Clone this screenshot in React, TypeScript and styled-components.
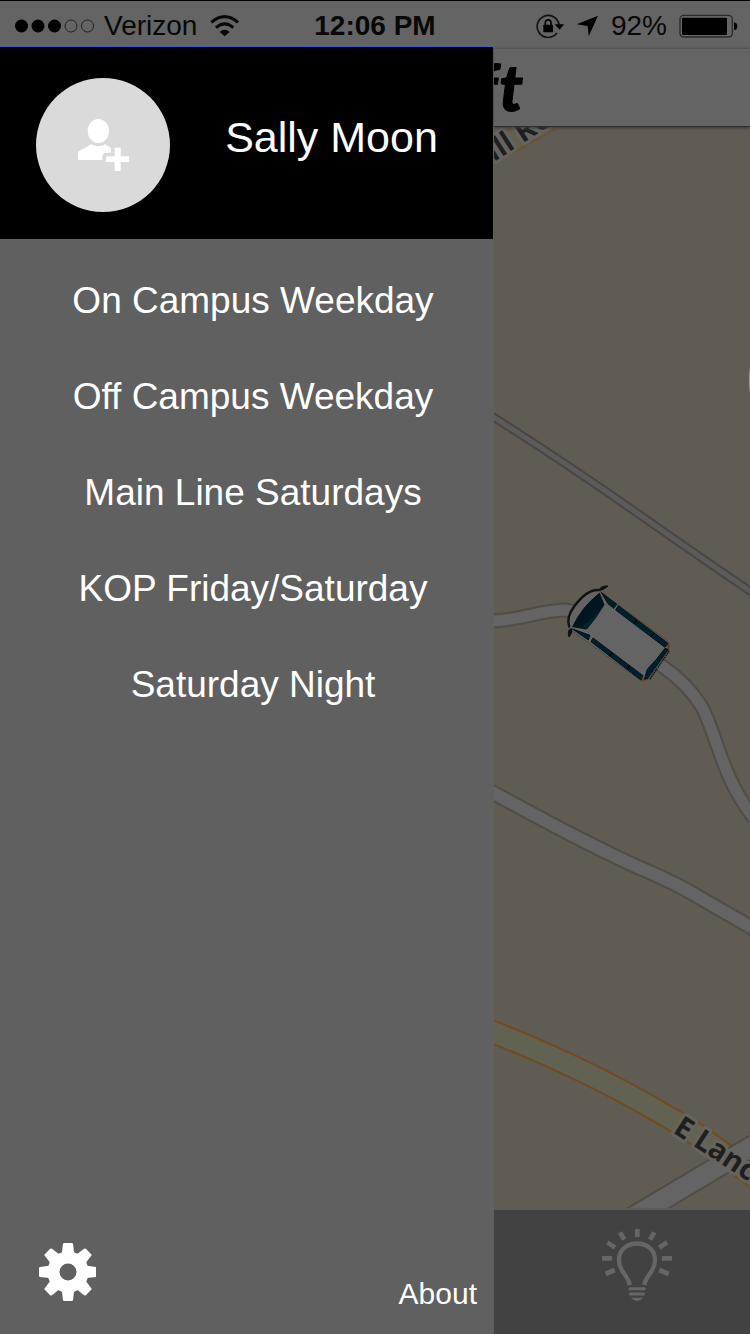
import React from "react";
import styled, { createGlobalStyle } from "styled-components";

const GlobalStyle = createGlobalStyle`
  *, *::before, *::after { box-sizing: border-box; }
  body { margin: 0; background: #606060; }
  button { border: 0; padding: 0; background: none; font: inherit; color: inherit; cursor: pointer; }
  a { color: inherit; text-decoration: none; }
  svg { display: block; flex: none; }
`;

const Page = styled.div`
  display: flex;
  flex-direction: column;
  min-height: 100vh;
  overflow: hidden;
  font-family: "Liberation Sans", Arial, Helvetica, sans-serif;
`;

const StatusBar = styled.header`
  display: grid;
  grid-template-columns: 1fr auto 1fr;
  align-items: center;
  height: 46px;
  padding: 4px 12px 0;
  border-top: 1px solid #000;
  background: #646464;
  color: #080808;
  font-size: 28px;
  line-height: 32px;
  white-space: nowrap;
`;

const StatusGroup = styled.div<{ $end?: boolean }>`
  display: flex;
  align-items: center;
  gap: ${(p) => (p.$end ? 12 : 10)}px;
  padding-left: 3px;
  justify-content: ${(p) => (p.$end ? "flex-end" : "flex-start")};
`;

const Clock = styled.time`
  font-weight: 700;
`;

const Body = styled.div`
  display: flex;
  flex: 1;
`;

const Drawer = styled.aside`
  display: flex;
  flex-direction: column;
  flex: none;
  width: min(494px, 66vw);
  border-right: 1px solid #606060;
  background: #606060;
  color: #fff;
`;

const Profile = styled.div`
  display: flex;
  align-items: flex-start;
  padding: 31px 0 27px 36px;
  border-top: 1px solid #4560c4;
  background: #000;
`;

const Avatar = styled.button`
  display: flex;
  align-items: center;
  justify-content: center;
  flex: none;
  width: 134px;
  height: 134px;
  border-radius: 50%;
  background: #dadada;
`;

const UserName = styled.h1`
  flex: 1;
  margin: 0;
  font-size: 43px;
  font-weight: 400;
  line-height: 118px;
  text-align: center;
  white-space: nowrap;
`;

const RouteList = styled.ul`
  flex: 1;
  margin: 0;
  padding: 14px 0 0 13px;
  list-style: none;
`;

const RouteLink = styled.a`
  display: block;
  font-size: 37px;
  line-height: 96px;
  text-align: center;
  white-space: nowrap;
`;

const DrawerFooter = styled.footer`
  display: flex;
  align-items: flex-end;
  justify-content: space-between;
  padding: 0 16px 22px 38px;
`;

const IconButton = styled.button`
  display: block;
  margin-bottom: 10px;
`;

const AboutLink = styled.a`
  font-size: 30px;
  line-height: 36px;
`;

const Screen = styled.main`
  display: flex;
  flex-direction: column;
  flex: 1;
  min-width: 0;
  background: #646464;
`;

const NavBar = styled.div`
  z-index: 1;
  display: flex;
  align-items: flex-start;
  height: 79px;
  margin-top: 2px;
  border-top: 1px solid #555;
  border-bottom: 1px solid #2c2c2c;
  box-shadow: 0 1px 3px #3a3835;
`;

const Logo = styled.div`
  display: flex;
  justify-content: flex-end;
  gap: 2px;
  width: 29px;
  overflow: hidden;
  color: #000;
  font-family: Lato, "Liberation Sans", sans-serif;
  font-size: 64px;
  font-style: italic;
  font-weight: 900;
  line-height: 76px;
  -webkit-text-stroke: 1px #000;
`;

const Map = styled.svg`
  flex: 1 1 0;
  width: 100%;
  min-height: 0;
  background: #605c54;
`;

const TabBar = styled.nav`
  display: flex;
  align-items: center;
  justify-content: center;
  height: 126px;
  padding: 0 0 16px 30px;
  border-top: 2px solid #5b5b5b;
  background: #424242;
`;

const StreetLabel = styled.text`
  fill: #1f1f1f;
  stroke: #66645f;
  stroke-width: 6px;
  stroke-linejoin: round;
  paint-order: stroke;
  font-family: "Open Sans", "Noto Sans", sans-serif;
  font-size: 29px;
  font-weight: 700;
`;

const routes = [
  "On Campus Weekday",
  "Off Campus Weekday",
  "Main Line Saturdays",
  "KOP Friday/Saturday",
  "Saturday Night",
];

const SignalDots = () => (
  <svg width="79" height="14" viewBox="0 0 79 14" aria-hidden="true">
    {[6.5, 23, 39.5].map((x) => (
      <circle key={x} cx={x} cy="7" r="6.5" fill="#000" />
    ))}
    {[56, 72.5].map((x) => (
      <circle key={x} cx={x} cy="7" r="6" fill="none" stroke="#222" strokeWidth="1" />
    ))}
  </svg>
);

const WifiIcon = () => (
  <svg width="38" height="22" viewBox="624 42 114 66" aria-hidden="true">
    <g fill="none" stroke="#080808" strokeWidth="9">
      <path d="M637,64 Q677,30 717,64" />
      <path d="M651,80 Q677,57 703,80" />
    </g>
    <path d="M662,93 Q677,80 692,93 L677,106 Z" fill="#080808" />
  </svg>
);

const RotationLockIcon = () => (
  <svg width="28" height="24" viewBox="480 38 84 72" aria-hidden="true">
    <path d="M549,70 A33,33 0 1 0 543,95" fill="none" stroke="#111" strokeWidth="5" />
    <path d="M536,69 H564 L551,85 Z" />
    <rect x="502" y="70" width="29" height="23" rx="2" />
    <path d="M508,72 V64 A8.500,8.500 0 0 1 525,64 V72" fill="none" stroke="#000" strokeWidth="5" />
  </svg>
);

const LocationIcon = () => (
  <svg width="23" height="22" viewBox="602 44 69 66" aria-hidden="true">
    <path d="M668,46 L640,108 L637,77 L604,72 Z" />
  </svg>
);

const BatteryIcon = () => (
  <svg width="59" height="24" viewBox="912 39 177 72" aria-hidden="true">
    <rect x="915" y="43" width="157" height="65" rx="11" fill="none" stroke="#2a2a2a" strokeWidth="4" />
    <rect x="921" y="50" width="135" height="52" rx="4" />
    <path d="M1077,64 Q1087,66 1087,76 Q1087,86 1077,88 Z" />
  </svg>
);

const AddPersonIcon = () => (
  <svg width="55" height="56" viewBox="168 171 165 168" fill="#fff" aria-hidden="true">
    <ellipse cx="235" cy="213" rx="32" ry="36" />
    <path d="M214,253 Q235,265 256,253 L273,264 V278 H258 Q247,279 247,290 V300 H178 Q174,300 174,296 V279 Q174,275 179,272 Z" />
    <rect x="284" y="263" width="18" height="70" />
    <rect x="258" y="289" width="69" height="17" />
  </svg>
);

const GearIcon = () => (
  <svg width="58" height="60" viewBox="-30 -30 58 60" aria-hidden="true">
    <circle r="14.500" fill="none" stroke="#fff" strokeWidth="12" />
    {[0, 45, 90, 135, 180, 225, 270, 315].map((a) => (
      <path
        key={a}
        transform={`rotate(${a})`}
        fill="#fff"
        d="M-7,-17 Q-5.600,-20 -5.300,-26 L-5,-28 Q-4.800,-29 -3.800,-29 H3.800 Q4.800,-29 5,-28 L5.300,-26 Q5.600,-20 7,-17 Z"
      />
    ))}
  </svg>
);

const BulbIcon = () => (
  <svg width="74" height="74" viewBox="60 81 222 222" fill="none" stroke="#666" aria-hidden="true">
    <path
      strokeWidth="13"
      d="M149,255 Q147,240 131,219 Q117,200 117,180 C117,114 225,114 225,180 Q225,200 211,219 Q195,240 193,255"
    />
    <path strokeWidth="9" strokeLinecap="round" d="M150,266 H193 M151,282 H191" />
    <path stroke="none" fill="#666" d="M152,293 H190 Q180,303 171,303 Q162,302 152,293 Z" />
    <path
      strokeWidth="14"
      d="M172,87 V111 M66,175 H96 M246,175 H276 M120,97 L133,119 M223,97 L210,119 M82,127 L105,143 M261,127 L238,143 M77,222 L104,210 M266,222 L238,210"
    />
  </svg>
);

const Van = () => (
  <g transform="translate(550 570) scale(0.33333)">
    <path
      d="M145,60 L355,215 Q362,228 352,245 L295,327 Q285,338 272,332 L66,182 Q40,160 70,118 Q105,60 145,60 Z"
      fill="#646464"
      stroke="#4b4943"
      strokeWidth="3"
    />
    <path d="M58,172 Q48,140 72,110 Q110,58 146,60" fill="none" stroke="#111" strokeWidth="7" />
    <g stroke="#001218" strokeWidth="3" strokeLinejoin="round">
      <path d="M148,70 L162,104 Q138,145 110,177 L68,170 Q95,112 148,70 Z" fill="#00171f" />
      <g fill="#00202b">
        <path d="M154,68 L200,103 L191,115 L174,101 Z" />
        <path d="M205,107 L354,220 L345,232 L197,120 Z" />
        <path d="M68,177 L120,196 L115,210 Z" />
        <path d="M129,204 L279,317 L273,330 L123,215 Z" />
        <path d="M345,235 L355,238 L292,326 L283,328 L292,298 Q320,270 345,235 Z" />
      </g>
    </g>
    <path d="M159,108 Q138,145 110,175 L96,173 Q132,142 159,108 Z" fill="#03262b" />
    <path
      d="M253,160 L260,150 M304,200 L312,189 M179,259 L187,248 M231,298 L239,287"
      stroke="#000"
      strokeWidth="4"
    />
    <path d="M358,243 L298,330" stroke="#111" strokeWidth="4" strokeDasharray="5 2" />
    <path d="M347,229 L359,223 V236 Z M275,320 L283,328 L276,336 Z" fill="#8a2b12" />
    <path
      d="M145,62 Q153,46 174,48 Q163,60 145,62 Z M66,176 Q50,177 57,201 Q67,192 66,176 Z"
      fill="#111"
      stroke="#111"
      strokeWidth="3"
    />
  </g>
);

const Road = ({ d, width, casing = "#504c47", fill = "#646464" }: { d: string; width: number; casing?: string; fill?: string }) => (
  <g fill="none">
    <path d={d} stroke={casing} strokeWidth={width} />
    <path d={d} stroke={fill} strokeWidth={width - 4} />
  </g>
);

const CampusMap = () => (
  <Map viewBox="494 127 256 1081" preserveAspectRatio="xMinYMin slice" role="img" aria-label="Shuttle map">
    <Road d="M484,156 L574,106" width={24} casing="#6b542f" fill="#626052" />
    <Road d="M490,415 Q560,459 640,515 T756,595" width={9} casing="#484746" fill="#5c5b59" />
    <Road d="M490,621 C520,621 535,611 565,610 C600,614 630,646 662,666 Q688,684 702,707 C718,738 722,778 754,818" width={15} />
    <Road d="M490,791 C550,824 600,850 640,868 Q680,885 700,898 L756,930" width={16} />
    <Road d="M488,1030 Q590,1070 673,1120 Q700,1135 756,1178" width={24} casing="#704c20" fill="#626252" />
    <Road d="M630,1219 L756,1144" width={23} />
    <ellipse cx="760" cy="380" rx="11" ry="30" fill="#a5a59f" />
    <StreetLabel transform="translate(494 162) rotate(-33)">ill Ro</StreetLabel>
    <StreetLabel transform="translate(672 1132) rotate(33)">E Lanc</StreetLabel>
    <Van />
  </Map>
);

export default function App() {
  return (
    <Page>
      <GlobalStyle />
      <StatusBar>
        <StatusGroup>
          <SignalDots />
          <span>Verizon</span>
          <WifiIcon />
        </StatusGroup>
        <Clock>12:06 PM</Clock>
        <StatusGroup $end>
          <RotationLockIcon />
          <LocationIcon />
          <span>92%</span>
          <BatteryIcon />
        </StatusGroup>
      </StatusBar>
      <Body>
        <Drawer>
          <Profile>
            <Avatar type="button" aria-label="Add profile picture">
              <AddPersonIcon />
            </Avatar>
            <UserName>Sally Moon</UserName>
          </Profile>
          <RouteList>
            {routes.map((route) => (
              <li key={route}>
                <RouteLink href="#">{route}</RouteLink>
              </li>
            ))}
          </RouteList>
          <DrawerFooter>
            <IconButton type="button" aria-label="Settings">
              <GearIcon />
            </IconButton>
            <AboutLink href="#">About</AboutLink>
          </DrawerFooter>
        </Drawer>
        <Screen>
          <NavBar>
            <Logo>
              <span>f</span>
              <span>t</span>
            </Logo>
          </NavBar>
          <CampusMap />
          <TabBar>
            <button type="button" aria-label="Tips">
              <BulbIcon />
            </button>
          </TabBar>
        </Screen>
      </Body>
    </Page>
  );
}
